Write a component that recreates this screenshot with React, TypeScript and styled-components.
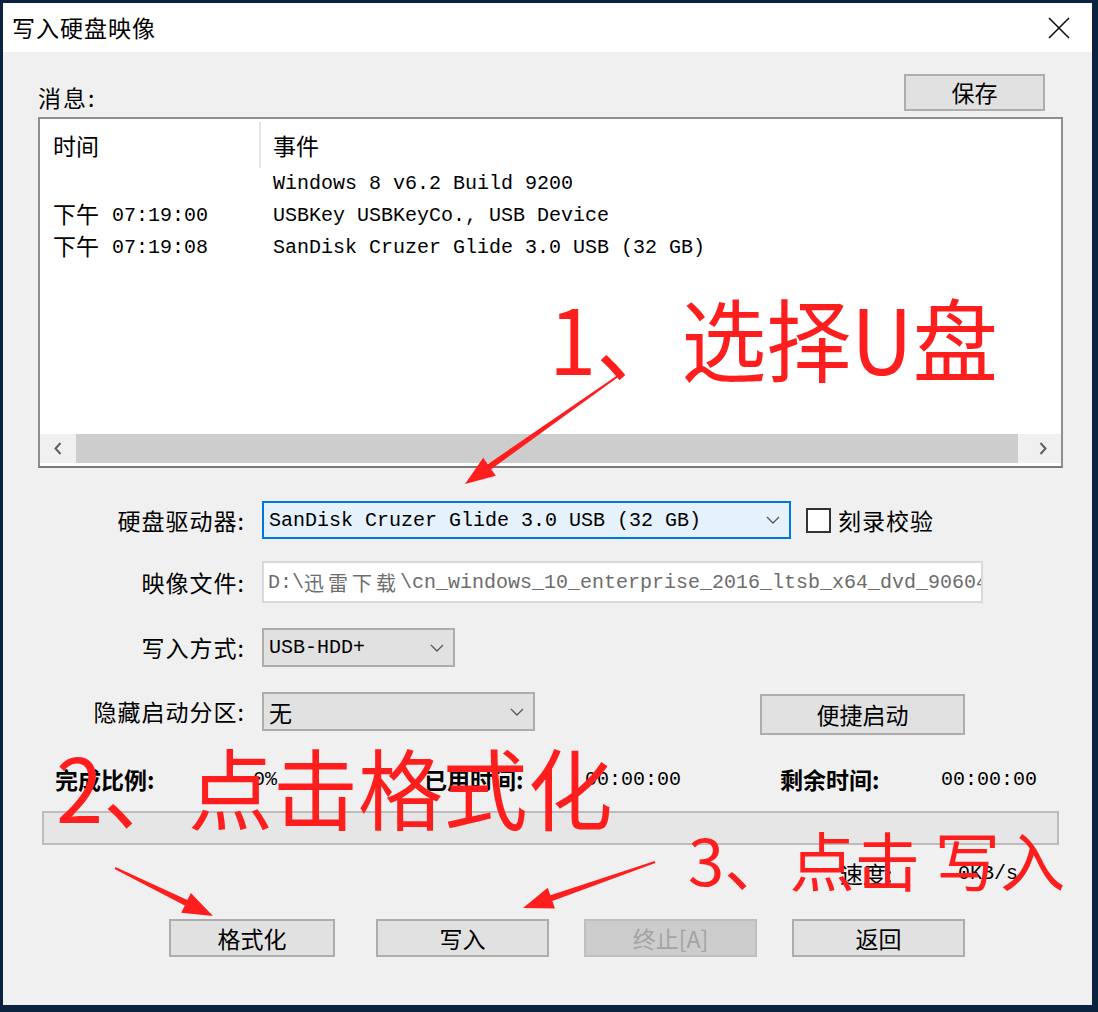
import React from "react";
import styled, { createGlobalStyle } from "styled-components";

const CJK = `"Noto Sans CJK SC", "Noto Sans", sans-serif`;
const MONO = `"Liberation Mono", "Noto Sans CJK SC", monospace`;
const RED = "#ff1e1e";

const rows = [
  { day: "", time: "", event: "Windows 8 v6.2 Build 9200" },
  { day: "下午", time: "07:19:00", event: "USBKey USBKeyCo., USB Device" },
  { day: "下午", time: "07:19:08", event: "SanDisk Cruzer Glide 3.0 USB (32 GB)" },
];

type Pt = [number, number];

// tapered arrow: thin tail, thick neck, filled head
const arrowPoints = (tail: Pt, tip: Pt) => {
  const dx = tip[0] - tail[0];
  const dy = tip[1] - tail[1];
  const len = Math.hypot(dx, dy);
  const ux = dx / len;
  const uy = dy / len;
  const nx = -uy;
  const ny = ux;
  const head = 30;
  const neck: Pt = [tip[0] - ux * head, tip[1] - uy * head];
  const p = (b: Pt, w: number): string =>
    `${b[0] + nx * w},${b[1] + ny * w}`;
  const m = (b: Pt, w: number): string =>
    `${b[0] - nx * w},${b[1] - ny * w}`;
  return [
    p(tail, 1),
    p(neck, 3),
    p(neck, 11),
    `${tip[0]},${tip[1]}`,
    m(neck, 11),
    m(neck, 3),
    m(tail, 1),
  ].join(" ");
};

const arrows: Array<[Pt, Pt]> = [
  [[618, 376], [465, 484]],
  [[115, 868], [213, 916]],
  [[655, 862], [523, 908]],
];

const Chevron = () => (
  <svg width="14" height="8" viewBox="0 0 14 8">
    <path d="M1 1 L7 7 L13 1" fill="none" stroke="#5a5a5a" strokeWidth="1.4" />
  </svg>
);

const App = () => {
  return (
    <>
      <GlobalStyle />
      <Frame>
        <Window>
          <TitleBar>
            <Title>写入硬盘映像</Title>
            <CloseButton>
              <svg width="22" height="22" viewBox="0 0 22 22">
                <path d="M1 1 L21 21 M21 1 L1 21" stroke="#111" strokeWidth="1.6" />
              </svg>
            </CloseButton>
          </TitleBar>

          <Body>
            <MessageHeader>
              <MessageLabel>消息:</MessageLabel>
              <Button $width={141} $height={37}>保存</Button>
            </MessageHeader>

            <ListBox>
              <ListHeader>
                <HeaderCell $divider>时间</HeaderCell>
                <HeaderCell>事件</HeaderCell>
              </ListHeader>
              {rows.map((r, i) => (
                <ListRow key={i}>
                  <TimeCell>
                    {r.day && <Day>{r.day}</Day>}
                    {r.time}
                  </TimeCell>
                  <EventCell>{r.event}</EventCell>
                </ListRow>
              ))}
              <ListFill />
              <HScroll>
                <ScrollArrow>
                  <svg width="8" height="13" viewBox="0 0 8 13">
                    <path d="M6.5 1 L1.5 6.5 L6.5 12" fill="none" stroke="#606060" strokeWidth="2" />
                  </svg>
                </ScrollArrow>
                <ScrollThumb />
                <ScrollArrow>
                  <svg width="8" height="13" viewBox="0 0 8 13">
                    <path d="M1.5 1 L6.5 6.5 L1.5 12" fill="none" stroke="#606060" strokeWidth="2" />
                  </svg>
                </ScrollArrow>
              </HScroll>
            </ListBox>

            <FormRow $top={33} $height={38}>
              <FieldLabel>硬盘驱动器:</FieldLabel>
              <Select $width={529} $height={38} $active>
                <SelectText>SanDisk Cruzer Glide 3.0 USB (32 GB)</SelectText>
                <Chevron />
              </Select>
              <CheckBox />
              <CheckLabel>刻录校验</CheckLabel>
            </FormRow>

            <FormRow $top={22} $height={42}>
              <FieldLabel>映像文件:</FieldLabel>
              <PathInput>
                D:\<Wide>迅雷下载</Wide>\cn_windows_10_enterprise_2016_ltsb_x64_dvd_9060409.iso
              </PathInput>
            </FormRow>

            <FormRow $top={25} $height={39}>
              <FieldLabel>写入方式:</FieldLabel>
              <Select $width={193} $height={39}>
                <SelectText>USB-HDD+</SelectText>
                <Chevron />
              </Select>
            </FormRow>

            <FormRow $top={25} $height={43} $alignTop>
              <FieldLabel $lineHeight={39}>隐藏启动分区:</FieldLabel>
              <Select $width={273} $height={39}>
                <SelectText $cjk>无</SelectText>
                <Chevron />
              </Select>
              <QuickButton $width={205} $height={41}>便捷启动</QuickButton>
            </FormRow>

            <StatusGrid>
              <StatusLabel>完成比例:</StatusLabel>
              <StatusValue>0%</StatusValue>
              <StatusLabel>已用时间:</StatusLabel>
              <StatusValue>00:00:00</StatusValue>
              <StatusLabel>剩余时间:</StatusLabel>
              <StatusValue>00:00:00</StatusValue>
            </StatusGrid>

            <ProgressBar />

            <SpeedRow>
              <SpeedLabel>速度:</SpeedLabel>
              <StatusValue>0KB/s</StatusValue>
            </SpeedRow>

            <ButtonRow>
              <Button $width={166} $height={38}>格式化</Button>
              <Button $width={173} $height={38}>写入</Button>
              <Button $width={173} $height={38} disabled>终止[A]</Button>
              <Button $width={173} $height={38}>返回</Button>
            </ButtonRow>
          </Body>
        </Window>

        <Arrows width="1098" height="1012" viewBox="0 0 1098 1012">
          {arrows.map(([tail, tip], i) => (
            <polygon key={i} points={arrowPoints(tail, tip)} fill={RED} />
          ))}
        </Arrows>
        <Note $left={549} $top={282} $size={90} $scale={0.945}>1、选择U盘</Note>
        <Note $left={56} $top={732} $size={88} $scale={0.965}>2、点击格式化</Note>
        <Note $left={688} $top={820} $size={64} $scale={1.02}>3、点击 写入</Note>
      </Frame>
    </>
  );
};

const GlobalStyle = createGlobalStyle`
  html, body {
    margin: 0;
    padding: 0;
    background: #0c2340;
  }
  body {
    font-family: ${CJK};
  }
  * {
    box-sizing: border-box;
  }
`;

const Frame = styled.div`
  position: relative;
  width: 1098px;
  height: 1012px;
  padding: 3px 6px 7px 3px;
  background: #0c2340;
  overflow: hidden;
`;

const Window = styled.div`
  display: flex;
  flex-direction: column;
  height: 100%;
  background: #f0f0f0;
`;

const TitleBar = styled.div`
  display: flex;
  align-items: center;
  justify-content: space-between;
  height: 49px;
  padding: 0 22px 0 9px;
  background: #ffffff;
`;

const Title = styled.div`
  font-size: 23px;
  letter-spacing: 1px;
  color: #000;
  line-height: 1;
`;

const CloseButton = styled.div`
  display: flex;
  width: 22px;
  height: 22px;
`;

const Body = styled.div`
  display: flex;
  flex-direction: column;
  padding: 22px 29px 0 35px;
`;

const MessageHeader = styled.div`
  display: flex;
  align-items: flex-end;
  justify-content: space-between;
  height: 37px;
  padding-right: 18px;
`;

const MessageLabel = styled.div`
  font-size: 23px;
  letter-spacing: 2px;
  line-height: 28px;
  color: #000;
`;

const Button = styled.button<{ $width: number; $height: number }>`
  width: ${(p) => p.$width}px;
  height: ${(p) => p.$height}px;
  padding: 0;
  font-family: ${CJK};
  font-size: 23px;
  line-height: 1;
  color: #000;
  background: #e1e1e1;
  border: 2px solid #adadad;
  &:disabled {
    color: #a3a3a3;
    background: #cccccc;
    border-color: #bfbfbf;
  }
`;

const QuickButton = styled(Button)`
  margin-top: 2px;
  margin-left: 225px;
`;

const ListBox = styled.div`
  display: flex;
  flex-direction: column;
  height: 351px;
  margin-top: 6px;
  background: #ffffff;
  border: 2px solid #8e8e8e;
  border-bottom-color: #7a7a7a;
`;

const ListHeader = styled.div`
  display: grid;
  grid-template-columns: 221px 1fr;
  height: 49px;
`;

const HeaderCell = styled.div<{ $divider?: boolean }>`
  display: flex;
  align-items: center;
  padding-left: ${(p) => (p.$divider ? 13 : 12)}px;
  margin-top: 3px;
  font-size: 23px;
  color: #000;
  border-right: ${(p) => (p.$divider ? "2px solid #e5e5e5" : "none")};
`;

const ListRow = styled.div`
  display: grid;
  grid-template-columns: 221px 1fr;
  height: 32px;
  align-items: center;
  font-family: ${MONO};
  font-size: 20px;
  line-height: 32px;
  color: #000;
  white-space: pre;
`;

const TimeCell = styled.div`
  display: flex;
  align-items: center;
  height: 32px;
  padding-left: 13px;
`;

const Day = styled.span`
  font-family: ${CJK};
  font-size: 23px;
  line-height: 1;
  margin: 0 13px 5px 0;
`;

const EventCell = styled.div`
  padding-left: 12px;
`;

const ListFill = styled.div`
  flex: 1;
`;

const HScroll = styled.div`
  display: flex;
  height: 29px;
  margin: 0 0 3px 0;
  background: #f0f0f0;
`;

const ScrollArrow = styled.div`
  display: flex;
  align-items: center;
  justify-content: center;
  width: 36px;
`;

const ScrollThumb = styled.div`
  flex: 1;
  margin-right: 7px;
  background: #cdcdcd;
`;

const FormRow = styled.div<{ $top: number; $height: number; $alignTop?: boolean }>`
  display: flex;
  align-items: ${(p) => (p.$alignTop ? "flex-start" : "center")};
  height: ${(p) => p.$height}px;
  margin-top: ${(p) => p.$top}px;
`;

const FieldLabel = styled.div<{ $lineHeight?: number }>`
  flex-shrink: 0;
  width: 207px;
  margin-right: 17px;
  text-align: right;
  font-size: 23px;
  letter-spacing: 1px;
  line-height: ${(p) => (p.$lineHeight ? `${p.$lineHeight}px` : "1")};
  color: #000;
`;

const Select = styled.div<{ $width: number; $height: number; $active?: boolean }>`
  display: flex;
  align-items: center;
  justify-content: space-between;
  flex-shrink: 0;
  width: ${(p) => p.$width}px;
  height: ${(p) => p.$height}px;
  padding: 0 9px 0 5px;
  background: ${(p) => (p.$active ? "#e5f1fb" : "#e1e1e1")};
  border: 2px solid ${(p) => (p.$active ? "#0078d7" : "#adadad")};
`;

const SelectText = styled.span<{ $cjk?: boolean }>`
  font-family: ${(p) => (p.$cjk ? CJK : MONO)};
  font-size: ${(p) => (p.$cjk ? 23 : 20)}px;
  color: #000;
  white-space: pre;
`;

const CheckBox = styled.div`
  width: 25px;
  height: 25px;
  margin-left: 15px;
  background: #ffffff;
  border: 2px solid #333333;
`;

const CheckLabel = styled.span`
  margin-left: 7px;
  font-size: 23px;
  letter-spacing: 1px;
  color: #000;
`;

const PathInput = styled.div`
  display: flex;
  align-items: center;
  width: 721px;
  height: 42px;
  padding-left: 4px;
  overflow: hidden;
  white-space: pre;
  font-family: ${MONO};
  font-size: 20px;
  color: #6d6d6d;
  background: #ffffff;
  border: 2px solid #d9d9d9;
`;

const Wide = styled.span`
  font-family: ${CJK};
  letter-spacing: 4px;
`;

const StatusGrid = styled.div`
  display: grid;
  grid-template-columns: 198px 171px 161px 195px 161px 1fr;
  align-items: center;
  height: 32px;
  margin-top: 27px;
  padding-left: 17px;
`;

const StatusLabel = styled.div`
  font-size: 23px;
  font-weight: 700;
  color: #000;
`;

const StatusValue = styled.div`
  font-family: ${MONO};
  font-size: 20px;
  color: #000;
`;

const ProgressBar = styled.div`
  width: 1017px;
  height: 34px;
  margin: 17px 0 0 4px;
  background: #e6e6e6;
  border: 2px solid #bcbcbc;
`;

const SpeedRow = styled.div`
  display: flex;
  align-items: center;
  justify-content: flex-end;
  height: 32px;
  margin-top: 12px;
  padding-right: 45px;
`;

const SpeedLabel = styled.div`
  width: 118px;
  font-size: 23px;
  color: #000;
`;

const ButtonRow = styled.div`
  display: flex;
  gap: 35px;
  margin-top: 30px;
  padding-left: 131px;
  & > :first-child {
    margin-right: 6px;
  }
`;

const Arrows = styled.svg`
  position: absolute;
  left: 0;
  top: 0;
  pointer-events: none;
`;

const Note = styled.div<{ $left: number; $top: number; $size: number; $scale: number }>`
  position: absolute;
  left: ${(p) => p.$left}px;
  top: ${(p) => p.$top}px;
  font-family: ${CJK};
  font-size: ${(p) => p.$size}px;
  line-height: 1.2;
  color: ${RED};
  white-space: pre;
  transform: scaleX(${(p) => p.$scale});
  transform-origin: left top;
  pointer-events: none;
`;

export default App;
